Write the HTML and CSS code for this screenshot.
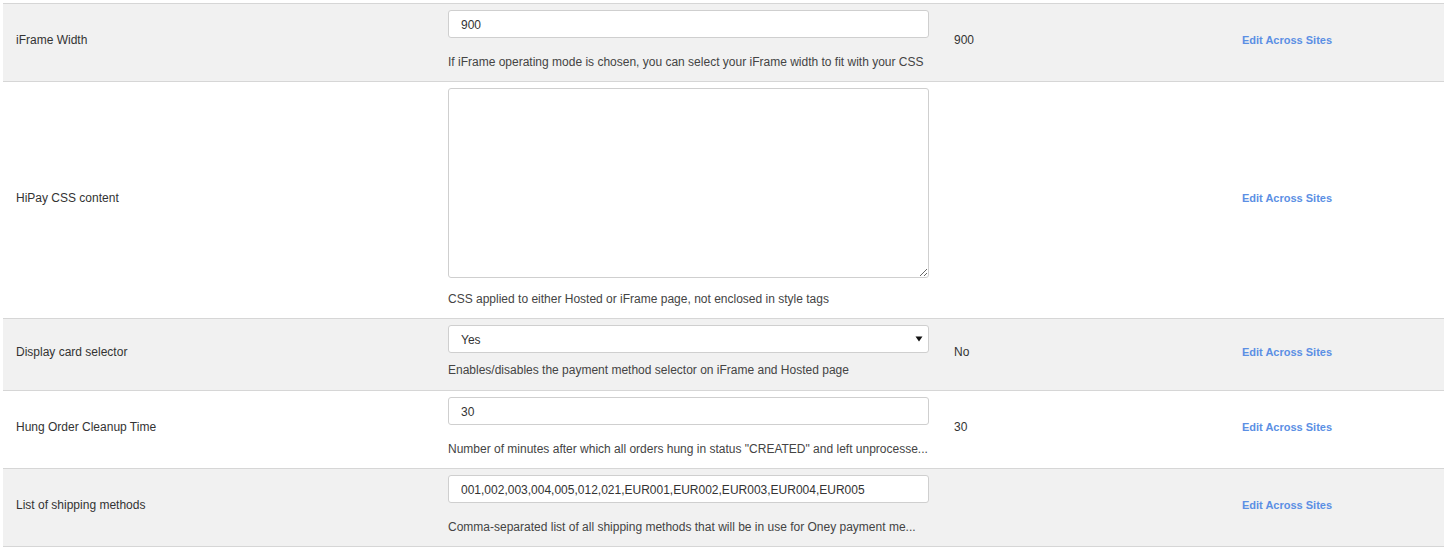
FILE: index.html
```html
<!DOCTYPE html>
<html>
<head>
<meta charset="utf-8">
<link rel="stylesheet" href="styles.css">
</head>
<body>
<div class="page">
  <div class="prefs">
    <div class="row alt">
      <div class="cell label">iFrame Width</div>
      <div class="cell field">
        <input class="ctl" type="text" value="900">
        <div class="help">If iFrame operating mode is chosen, you can select your iFrame width to fit with your CSS</div>
      </div>
      <div class="cell value">900</div>
      <div class="cell action"><a href="#" class="link">Edit Across Sites</a></div>
    </div>
    <div class="row">
      <div class="cell label">HiPay CSS content</div>
      <div class="cell field">
        <textarea class="ctl area"></textarea>
        <div class="help help-area">CSS applied to either Hosted or iFrame page, not enclosed in style tags</div>
      </div>
      <div class="cell value"></div>
      <div class="cell action"><a href="#" class="link">Edit Across Sites</a></div>
    </div>
    <div class="row alt">
      <div class="cell label">Display card selector</div>
      <div class="cell field">
        <div class="select-wrap">
          <select class="ctl sel"><option>Yes</option><option>No</option></select>
          <svg class="arrow" width="8" height="8" viewBox="0 0 8 8"><path d="M0.5 1.5 H7.5 L4 6.5 Z" fill="#111"/></svg>
        </div>
        <div class="help help-sel">Enables/disables the payment method selector on iFrame and Hosted page</div>
      </div>
      <div class="cell value">No</div>
      <div class="cell action"><a href="#" class="link">Edit Across Sites</a></div>
    </div>
    <div class="row">
      <div class="cell label">Hung Order Cleanup Time</div>
      <div class="cell field">
        <input class="ctl" type="text" value="30">
        <div class="help">Number of minutes after which all orders hung in status "CREATED" and left unprocesse...</div>
      </div>
      <div class="cell value">30</div>
      <div class="cell action"><a href="#" class="link">Edit Across Sites</a></div>
    </div>
    <div class="row alt">
      <div class="cell label">List of shipping methods</div>
      <div class="cell field">
        <input class="ctl" type="text" value="001,002,003,004,005,012,021,EUR001,EUR002,EUR003,EUR004,EUR005">
        <div class="help">Comma-separated list of all shipping methods that will be in use for Oney payment me...</div>
      </div>
      <div class="cell value"></div>
      <div class="cell action"><a href="#" class="link">Edit Across Sites</a></div>
    </div>
  </div>
</div>
</body>
</html>
```

FILE: styles.css
```css
html, body {
  margin: 0;
  padding: 0;
  background: #ffffff;
}
body {
  font-family: "Liberation Sans", Arial, sans-serif;
  font-size: 12px;
  color: #333333;
}
.page {
  padding: 3px 6px 0 3px;
}
.prefs {
  border-top: 1px solid #d6d6d6;
}
.row {
  display: grid;
  grid-template-columns: 433px 506px 288px 1fr;
  border-bottom: 1px solid #d6d6d6;
  background: #ffffff;
}
.row.alt {
  background: #f1f1f1;
}
.cell {
  padding: 7px 0 12px 0;
  display: flex;
  align-items: center;
  min-width: 0;
}
.label {
  padding-left: 13px;
}
.field {
  flex-direction: column;
  align-items: flex-start;
  padding: 6px 13px 11px 12px;
}
.value {
  padding-left: 12px;
}
.action {
  padding-left: 12px;
}
.ctl {
  box-sizing: border-box;
  width: 481px;
  height: 28px;
  margin: 0;
  border: 1px solid #cfcfcf;
  border-radius: 3px;
  background: #ffffff;
  font-family: inherit;
  font-size: 12px;
  color: #333333;
  padding: 1px 12px 0 12px;
  outline: none;
}
.area {
  height: 190px;
  display: block;
  resize: both;
  padding: 6px 12px;
}
.select-wrap {
  position: relative;
  width: 481px;
  height: 28px;
}
.sel {
  -webkit-appearance: none;
  appearance: none;
  display: block;
}
.arrow {
  position: absolute;
  right: 6px;
  top: 10px;
}
.help {
  width: 481px;
  margin-top: 16px;
  line-height: 16px;
  white-space: nowrap;
  color: #444444;
}
.help-area {
  margin-top: 13px;
}
.help-sel {
  margin-top: 9px;
  margin-bottom: 1px;
}
.link {
  color: #5b8fe4;
  font-weight: bold;
  text-decoration: none;
  font-size: 11px;
}
```
